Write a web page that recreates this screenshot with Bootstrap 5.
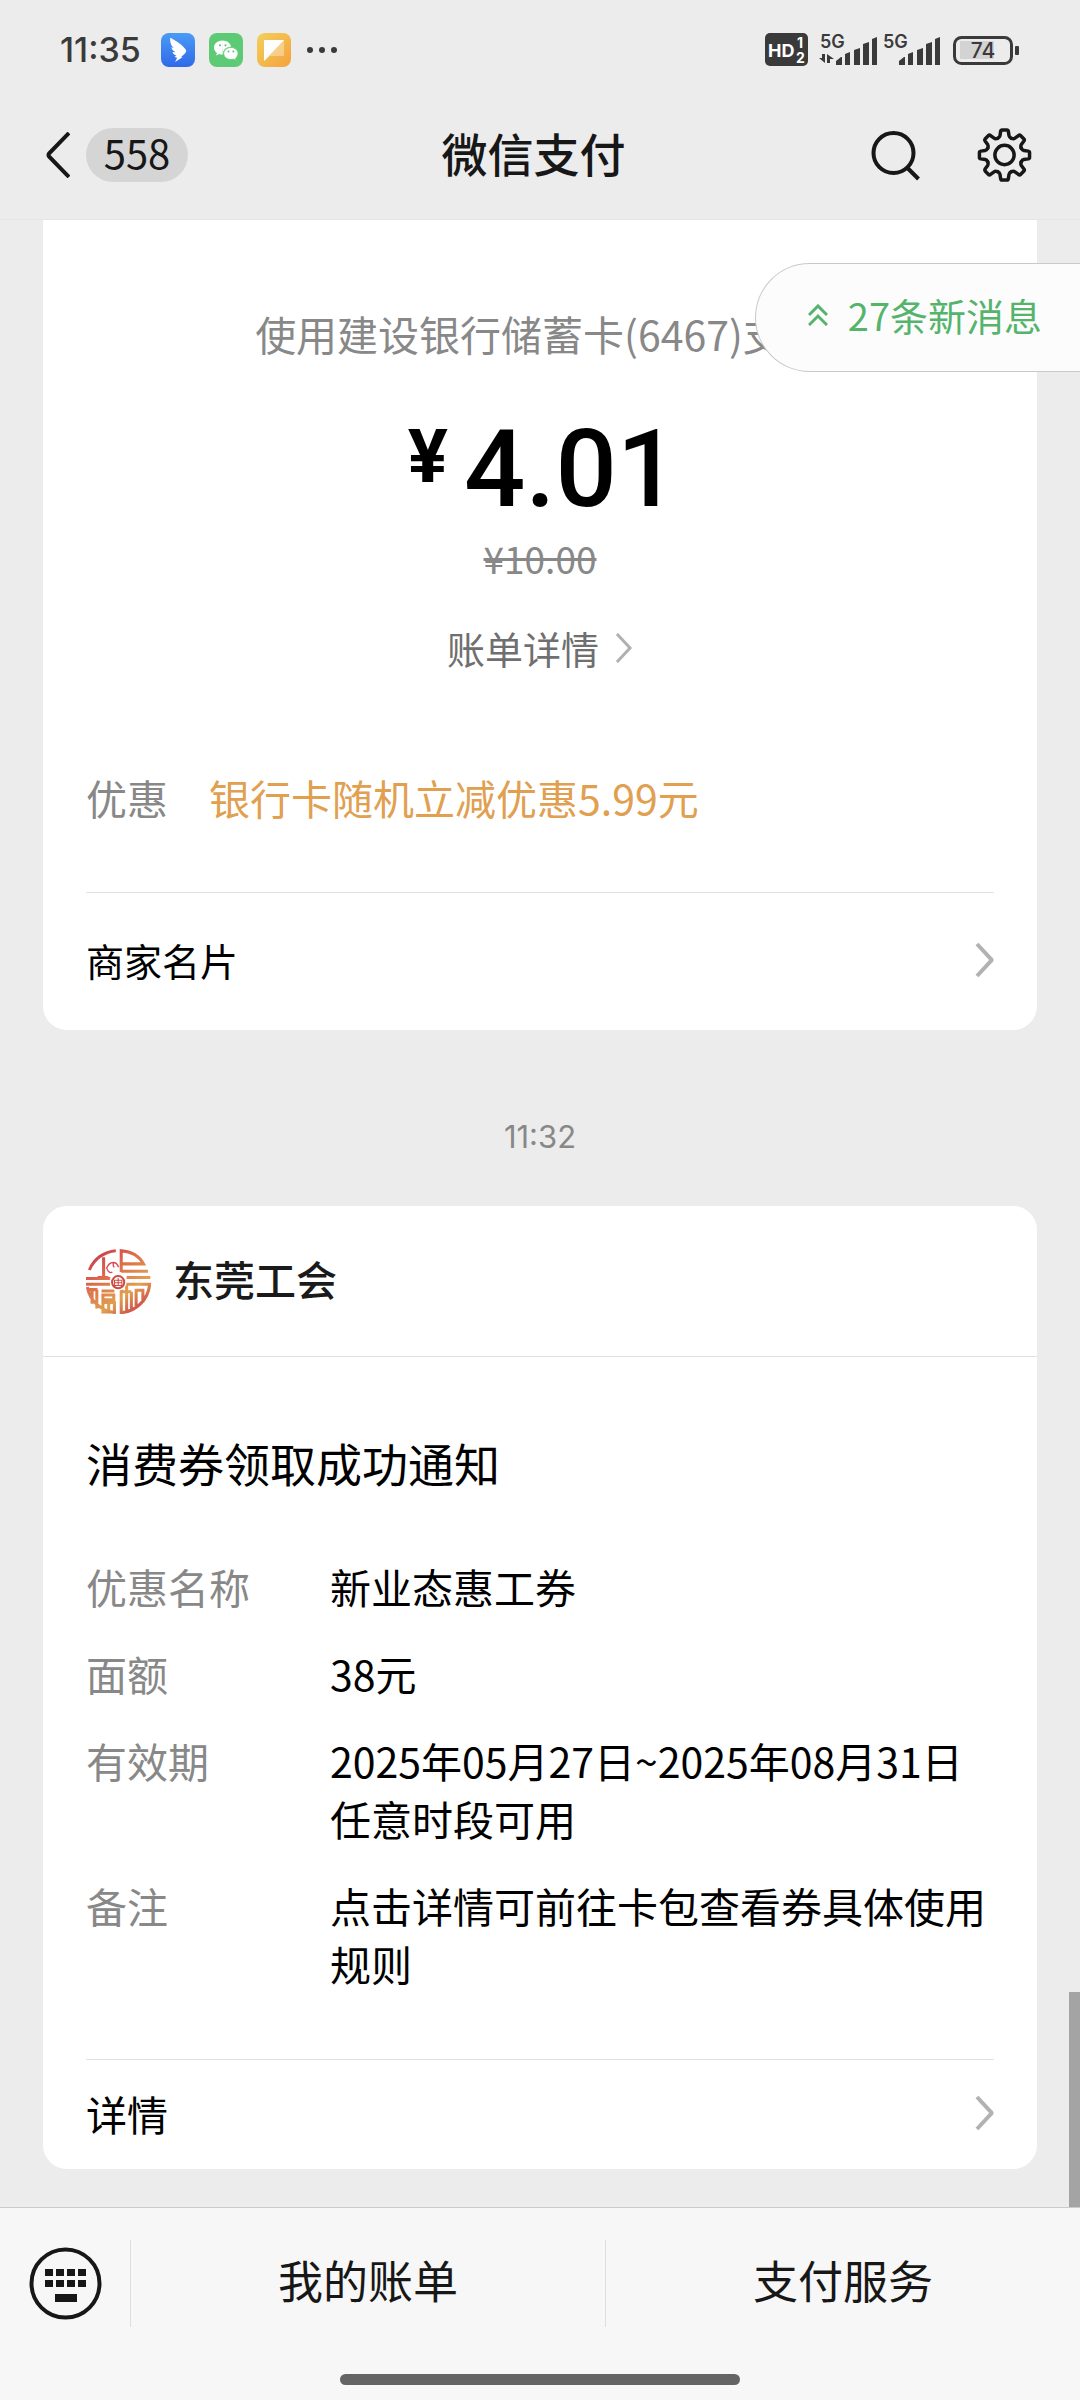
<!DOCTYPE html>
<html lang="zh-CN">
<head>
<meta charset="utf-8">
<meta name="viewport" content="width=device-width, initial-scale=1">
<title>微信支付</title>
<link href="https://cdn.jsdelivr.net/npm/bootstrap@5.3.0/dist/css/bootstrap.min.css" rel="stylesheet">
<style>
  body { background: #ececec; color: #000; font-family: "Noto Sans CJK SC", sans-serif; font-size: 41px; line-height: 58px; }
  svg { display: block; flex: none; }
  a, a:hover { color: inherit; text-decoration: none; }
  .status { padding: 27px 60px; height: 100px; color: #3a3a3a; }
  .clock { font: 500 34px/34px Inter, sans-serif; margin-right: 20px; }
  .apps { gap: 14px; }
  .topbar { padding: 28px 48px 37px 46px; border-bottom: 1px solid #e6e6e6; color: #171717; }
  .topbar button, .dock button { border: 0; background: none; padding: 0; color: #171717; }
  .unread { margin-left: 16px; background: #d5d5d5; border-radius: 27px; width: 102px; padding-bottom: 6px; font-size: 40px; line-height: 48px; }
  .page-title { font-size: 46px; line-height: 48px; padding-bottom: 6px; font-weight: 500; margin: 0; }
  .tools { gap: 57px; }
  .chat { padding: 0 43px 38px; }
  .bubble { background: #fff; border-radius: 24px; }
  .bubble-cut { border-radius: 0 0 24px 24px; padding-top: 84px; }
  .inner { padding: 0 43px; }
  .soft { color: #888; }
  .amount { margin-top: 55px; padding-left: 6px; gap: 16px; font-family: Roboto, sans-serif; font-weight: 500; }
  .amount-sign { font-size: 75px; line-height: 78px; font-weight: 700; }
  .amount-num { font-size: 108px; line-height: 104px; }
  .was { margin-top: 11px; font-size: 37px; line-height: 52px; }
  .bill { margin-top: 35px; font-size: 38px; color: #6f6f6f; gap: 16px; }
  .promo { margin-top: 91px; padding-bottom: 66px; gap: 41px; border-bottom: 1px solid #e2e2e2; }
  .promo-text { color: #e0a050; }
  .merchant { font-size: 38px; padding: 38px 0 41px; }
  .stamp { font: 31px/58px Inter, sans-serif; margin: 78px 0 40px; }
  .sender { padding: 43px 43px 42px; height: 151px; gap: 22px; border-bottom: 1px solid #e2e2e2; color: #1a1a1a; font-weight: 500; }
  .notice { padding-top: 76px; }
  .notice-title { font-size: 46px; line-height: 58px; font-weight: 400; margin: 0 0 66px; }
  .facts { gap: 29px; margin: 0; padding-bottom: 67px; border-bottom: 1px solid #e2e2e2; }
  .facts dt { width: 244px; flex: none; font-weight: 400; }
  .facts dd { margin: 0; }
  .detail { padding: 24px 0 27px; }
  .newmsg { top: 43px; right: 0; height: 109px; padding: 0 38px 6px 52px; gap: 20px; background: #fcfcfc; border: 1px solid #c9c9c9; border-right: 0; border-radius: 55px 0 0 55px; color: #55b46c; font-size: 38px; }
  .thumb { right: 0; bottom: 0; width: 11px; height: 215px; background: #a4a4a4; }
  .dock { background: #f7f7f7; border-top: 1px solid #cbcbcb; height: 193px; padding-top: 32px; }
  .dock-row { height: 87px; }
  .dock .kbd-btn { width: 130px; padding-left: 29px; }
  .dock .tab-btn { flex: 1 1 0; border-left: 1px solid #dedede; font-size: 45px; line-height: 58px; padding-bottom: 7px; }
  .home { width: 400px; height: 11px; border-radius: 6px; background: #646464; margin: 47px auto 0; }
</style>
<script src="https://cdn.jsdelivr.net/npm/bootstrap@5.3.0/dist/js/bootstrap.bundle.min.js"></script>
</head>
<body class="min-vh-100 d-flex flex-column">
<div class="status d-flex align-items-center justify-content-between">
  <div class="d-flex align-items-center">
    <span class="clock">11:35</span>
    <div class="apps d-flex align-items-center">
      <svg width="34" height="34" viewBox="0 0 34 34"><defs><linearGradient id="ding" x2="0" y2="1"><stop stop-color="#4b9bf5"/><stop offset="1" stop-color="#2f6aea"/></linearGradient></defs><rect width="34" height="34" rx="8" fill="url(#ding)"/><path d="M10 5C15 8 22 12 25 17c.6 1.200 0 2.400-1.500 4l-3.500 3 1.500.3-7.500 4.700 2.200-4.200-2.700-.8 2-1.500c-2.500-.8-3.500-2-4-3.600l3 .3c-2.500-1.500-3.700-3-4.200-5l2.500.8C10.500 13 9 10.500 9.200 5z" fill="#fff"/></svg>
      <svg width="34" height="34" viewBox="0 0 34 34"><rect width="34" height="34" rx="8" fill="#5dcb75"/><path d="M13.500 7.500C8.700 7.500 5 10.500 5 14.500c0 2.300 1.200 4.200 3 5.500l-.8 2.600 3-1.600c1 .4 2.200.6 3.300.6z M13.500 7.500c4.500 0 8 2.800 8.500 6.300-5 .2-8.500 3.200-7.800 7.800h-1z" fill="#fff"/><path d="M22 14.500c-4.200 0-7.300 2.600-7.300 6s3.100 6 7.300 6c.9 0 1.900-.1 2.700-.4l2.500 1.400-.7-2.200c1.500-1.100 2.500-2.800 2.500-4.800 0-3.400-2.900-6-7-6z" fill="#fff" stroke="#5dcb75" stroke-width=".8"/><g fill="#5dcb75"><circle cx="11" cy="12.300" r="1.100"/><circle cx="16.500" cy="12.300" r="1.100"/><circle cx="19.500" cy="18.500" r="1"/><circle cx="24.300" cy="18.500" r="1"/></g></svg>
      <svg width="34" height="34" viewBox="0 0 34 34"><defs><linearGradient id="note" x2="1" y2="1"><stop stop-color="#f2d05c"/><stop offset="1" stop-color="#f4a23c"/></linearGradient></defs><rect width="34" height="34" rx="8" fill="url(#note)"/><path d="M7 7h20v16H13L7 28z" fill="#fff" opacity=".35"/><path d="M7 7h20L7 28z" fill="#fff"/></svg>
      <svg width="34" height="34" viewBox="0 0 34 34" fill="#3a3a3a"><circle cx="5" cy="17" r="3"/><circle cx="17" cy="17" r="3"/><circle cx="29" cy="17" r="3"/></svg>
    </div>
  </div>
  <svg width="256" height="46" viewBox="764 27 256 46" fill="#3a3a3a" font-family="Inter, sans-serif" font-weight="700">
    <rect x="765" y="33" width="43" height="33" rx="5"/>
    <g fill="#fff"><text x="768" y="57" font-size="18">HD</text><text x="797" y="48" font-size="14">1</text><text x="796" y="63" font-size="14">2</text></g>
    <g font-size="18" font-weight="600"><text x="820" y="48">5G</text><text x="883" y="48">5G</text></g>
    <path d="M819 58h3v-4h3v9zM827 63v-9l7 5h-4v4z"/>
    <g id="bars"><path d="M836 65v-4l5-4h1v8zM845 65V54l5-2v13zM854 65V50l6-2v17zM863 65V44l6-2v23zM872 65V39l5-2v28z"/></g>
    <use href="#bars" x="63"/>
    <rect x="960" y="41" width="34" height="18" fill="#d3d3d3"/>
    <rect x="954.500" y="37.500" width="57" height="26" rx="7" fill="none" stroke="#3a3a3a" stroke-width="3"/>
    <rect x="1015" y="46" width="4" height="9" rx="1"/>
    <text x="983" y="58" font-size="21" font-weight="500" text-anchor="middle">74</text>
  </svg>
</div>
<header class="topbar d-flex align-items-center justify-content-between">
  <button type="button" class="d-flex align-items-center me-2" aria-label="返回">
    <svg width="24" height="46" viewBox="0 0 24 46" fill="none" stroke="#171717" stroke-width="4"><path d="M23 1 3 21.500q-1 1.500 0 3L23 45"/></svg>
    <span class="unread text-center">558</span>
  </button>
  <h1 class="page-title">微信支付</h1>
  <div class="tools d-flex align-items-center">
    <button type="button" aria-label="搜索"><svg width="49" height="52" viewBox="0 0 49 52" fill="none" stroke="#171717" stroke-width="4"><circle cx="22.500" cy="24" r="20"/><path d="M36 38.500 47.500 50"/></svg></button>
    <button type="button" aria-label="设置"><svg width="55" height="54" viewBox="-27.500 -28 55 56" fill="none" stroke="#171717" stroke-width="3.600" stroke-linecap="round" stroke-linejoin="round"><defs><path id="cog" d="M-7.200-17.300Q-5-18.300-4.700-20L-4-24.500Q-3.700-26-2.500-26H2.500Q3.700-26 4-24.500L4.700-20Q5-18.300 7.200-17.300"/></defs><use href="#cog"/><use href="#cog" transform="rotate(45)"/><use href="#cog" transform="rotate(90)"/><use href="#cog" transform="rotate(135)"/><use href="#cog" transform="rotate(180)"/><use href="#cog" transform="rotate(225)"/><use href="#cog" transform="rotate(270)"/><use href="#cog" transform="rotate(315)"/><circle r="10"/></svg></button>
  </div>
</header>
<main class="chat flex-fill position-relative">
  <section class="bubble bubble-cut">
    <div class="inner">
      <div class="soft text-center">使用建设银行储蓄卡(6467)支付</div>
      <div class="amount d-flex justify-content-center align-items-start"><span class="amount-sign">¥</span><span class="amount-num">4.01</span></div>
      <div class="was soft text-center"><s>¥10.00</s></div>
      <a href="#" class="bill d-flex justify-content-center align-items-center">账单详情 <svg width="18" height="30" viewBox="0 0 18 30" fill="none" stroke="#b0b0b0" stroke-width="3"><path d="M2 1 15 15 2 29"/></svg></a>
      <div class="promo d-flex"><span class="soft">优惠</span><span class="promo-text">银行卡随机立减优惠5.99元</span></div>
      <a href="#" class="merchant d-flex justify-content-between align-items-center">商家名片 <svg width="19" height="36" viewBox="0 0 19 36" fill="none" stroke="#b2b2b2" stroke-width="4"><path d="M2 2 16 17q1 1 0 2L2 34"/></svg></a>
    </div>
  </section>
  <div class="stamp soft text-center">11:32</div>
  <section class="bubble">
    <div class="sender d-flex align-items-start">
      <svg width="65" height="65" viewBox="0 0 192 192" fill="none" stroke="url(#seal)" stroke-width="9">
        <defs><linearGradient id="seal" gradientUnits="userSpaceOnUse" x1="20" y1="0" x2="160" y2="192"><stop stop-color="#c8324a"/><stop offset=".35" stop-color="#dd6a4c"/><stop offset=".7" stop-color="#e0a050"/><stop offset="1" stop-color="#c8374a"/></linearGradient></defs>
        <path d="M10 62A92 92 0 0 1 88 5M52 24V82M34 84H66M104 46V5Q150 8 170 44H104M104 66H183M104 46v22M120 84H190M0 87H72"/>
        <path d="M0 104H72M4 120h30M18 120v42M4 112A92 92 0 0 0 88 188M32 120v56M46 124H84M50 136h32v14H50zM50 158h34v28H50zM67 158v28M104 104H188A92 92 0 0 1 104 188V104M120 104v80M104 126h30M134 126v54M148 168V122h20v36"/>
        <path d="M60 58q8-18 20-18t16 14M62 58q6 16 16 10M82 40q-4 10 2 14" stroke-width="4" stroke="#d94a55"/>
        <circle cx="95" cy="98" r="22" fill="#fff" stroke="#fff" stroke-width="6"/><circle cx="95" cy="98" r="18" stroke="#cf4a42" stroke-width="6"/><path d="M84 92h22v16H84zM95 86v22M84 100h22" stroke="#cf4a42" stroke-width="3"/>
      </svg>
      <span>东莞工会</span>
    </div>
    <div class="inner notice">
      <h2 class="notice-title">消费券领取成功通知</h2>
      <dl class="facts d-flex flex-column">
        <div class="d-flex"><dt class="soft">优惠名称</dt><dd>新业态惠工券</dd></div>
        <div class="d-flex"><dt class="soft">面额</dt><dd>38元</dd></div>
        <div class="d-flex"><dt class="soft">有效期</dt><dd>2025年05月27日~2025年08月31日<br>任意时段可用</dd></div>
        <div class="d-flex"><dt class="soft">备注</dt><dd>点击详情可前往卡包查看券具体使用规则</dd></div>
      </dl>
      <a href="#" class="detail d-flex justify-content-between align-items-center">详情 <svg width="19" height="36" viewBox="0 0 19 36" fill="none" stroke="#b2b2b2" stroke-width="4"><path d="M2 2 16 17q1 1 0 2L2 34"/></svg></a>
    </div>
  </section>
  <a href="#" class="newmsg position-absolute d-flex align-items-center"><svg width="20" height="22" viewBox="0 0 20 22" fill="none" stroke="#55b46c" stroke-width="3"><path d="M1 11l9-9 9 9M1 21l9-9 9 9"/></svg>27条新消息</a>
  <div class="thumb position-absolute"></div>
</main>
<footer class="dock">
  <div class="dock-row d-flex">
    <button type="button" class="kbd-btn" aria-label="键盘"><svg width="73" height="73" viewBox="0 0 73 73"><circle cx="36.500" cy="36.500" r="34" fill="none" stroke="#171717" stroke-width="4"/><g fill="#171717"><path id="keys" d="M16 22h8v7h-8zM27 22h8v7h-8zM38 22h8v7h-8zM49 22h8v7h-8z"/><use href="#keys" y="11"/><rect x="26" y="47" width="22" height="8"/></g></svg></button>
    <button type="button" class="tab-btn">我的账单</button>
    <button type="button" class="tab-btn">支付服务</button>
  </div>
  <div class="home"></div>
</footer>
</body>
</html>
